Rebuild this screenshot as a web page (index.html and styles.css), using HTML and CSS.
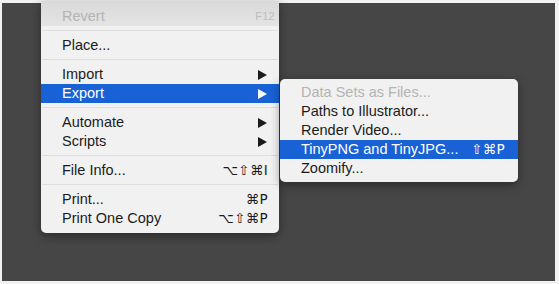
FILE: index.html
```html
<!DOCTYPE html>
<html>
<head>
<meta charset="utf-8">
<link rel="stylesheet" href="styles.css">
</head>
<body>
<div class="screen">
  <div class="desk">
    <div class="menu main">
      <div class="item disabled top"><span>Revert</span><span class="key">F12</span></div>
      <div class="sep"></div>
      <div class="item"><span>Place...</span></div>
      <div class="sep"></div>
      <div class="item"><span>Import</span><span class="arrow"></span></div>
      <div class="item active"><span>Export</span><span class="arrow"></span></div>
      <div class="sep"></div>
      <div class="item"><span>Automate</span><span class="arrow"></span></div>
      <div class="item"><span>Scripts</span><span class="arrow"></span></div>
      <div class="sep"></div>
      <div class="item"><span>File Info...</span><span class="key">⌥⇧⌘I</span></div>
      <div class="sep"></div>
      <div class="item"><span>Print...</span><span class="key">⌘P</span></div>
      <div class="item"><span>Print One Copy</span><span class="key">⌥⇧⌘P</span></div>
    </div>
    <div class="menu sub">
      <div class="item disabled"><span>Data Sets as Files...</span></div>
      <div class="item"><span>Paths to Illustrator...</span></div>
      <div class="item"><span>Render Video...</span></div>
      <div class="item active"><span>TinyPNG and TinyJPG...</span><span class="key">⇧⌘P</span></div>
      <div class="item"><span>Zoomify...</span></div>
    </div>
  </div>
</div>
</body>
</html>
```

FILE: styles.css
```css
html, body {
  margin: 0;
  padding: 0;
}
body {
  width: 559px;
  height: 284px;
  overflow: hidden;
  font-family: "Liberation Sans", "DejaVu Sans", sans-serif;
  font-size: 14.5px;
  color: #1b1b1b;
}
.screen {
  width: 559px;
  height: 284px;
  box-sizing: border-box;
  padding: 3px 4px 3px 2px;
  background: #f2f2f2;
}
.desk {
  position: relative;
  height: 278px;
  background: #464646;
}
.menu {
  position: absolute;
  width: 238px;
  box-sizing: border-box;
  background: #f1f1f1;
  box-shadow: 0 3px 10px rgba(0, 0, 0, 0.4);
}
.main {
  left: 39px;
  top: -2px;
  padding: 6px 0 5px;
  border-radius: 0 0 5px 5px;
}
.sub {
  left: 278px;
  top: 76px;
  padding: 4px 0;
  border-radius: 5px;
}
.item {
  display: flex;
  justify-content: space-between;
  align-items: center;
  height: 19px;
  line-height: 19px;
  padding: 0 11px 0 21px;
  white-space: nowrap;
}
.sub .item {
  padding-right: 13px;
}
.item.top {
  margin-top: -6px;
  height: 25px;
  padding-top: 6px;
  box-sizing: border-box;
  background: linear-gradient(#d9d9d9, #e4e4e4);
  padding-right: 4px;
}
.disabled {
  color: #b4b4b4;
}
.key {
  font-family: "DejaVu Sans", "Liberation Sans", sans-serif;
  font-size: 13.5px;
  letter-spacing: 0.3px;
}
.top .key {
  font-family: "Liberation Sans", sans-serif;
  font-size: 11px;
  color: #bdbdbd;
}
.active {
  background: #1862d6;
  color: #fff;
}
.arrow {
  width: 0;
  height: 0;
  margin-right: 1px;
  border-top: 5px solid transparent;
  border-bottom: 5px solid transparent;
  border-left: 9px solid #1b1b1b;
}
.active .arrow {
  border-left-color: #fff;
}
.sep {
  height: 10px;
  position: relative;
}
.sep::after {
  content: "";
  position: absolute;
  left: 1px;
  right: 1px;
  top: 4px;
  height: 1px;
  background: #dedede;
}
```
